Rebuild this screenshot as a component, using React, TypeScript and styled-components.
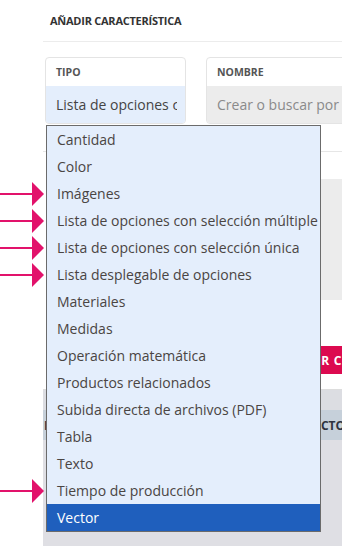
import React from 'react';
import styled, { createGlobalStyle } from 'styled-components';

const GlobalStyle = createGlobalStyle`
  html, body {
    margin: 0;
    padding: 0;
    background: #ffffff;
  }
  * {
    box-sizing: border-box;
  }
`;

const Screen = styled.div`
  position: relative;
  width: 342px;
  height: 546px;
  overflow: hidden;
  background: #ffffff;
  font-family: 'Open Sans', 'Noto Sans', sans-serif;
`;

const Panel = styled.div`
  margin-left: 43px;
  width: 420px;
`;

const TitleBar = styled.div`
  height: 42px;
  padding-left: 7px;
  border-bottom: 1px solid #ececec;
  display: flex;
  align-items: center;
`;

const Title = styled.h2`
  margin: 0;
  font-size: 11px;
  font-weight: 700;
  letter-spacing: -0.25px;
  color: #333333;
  text-transform: uppercase;
`;

const FieldsRow = styled.div`
  display: flex;
  gap: 20px;
  padding: 15px 0 27px 2px;
  border-bottom: 1px solid #e6e6e6;
`;

const FieldCard = styled.div<{ $width: number }>`
  width: ${(p) => p.$width}px;
  border: 1px solid #e4e4e4;
  border-radius: 4px;
  overflow: hidden;
`;

const FieldLabel = styled.div`
  height: 28px;
  padding: 0 10px;
  display: flex;
  align-items: center;
  font-size: 10.5px;
  font-weight: 700;
  color: #555555;
`;

const FieldValue = styled.div<{ $tone: 'blue' | 'gray' }>`
  height: 37px;
  padding: 0 8px 0 10px;
  display: flex;
  align-items: center;
  background: ${(p) => (p.$tone === 'blue' ? '#e4eefc' : '#ececec')};
  font-size: 14px;
  color: ${(p) => (p.$tone === 'blue' ? '#444444' : '#8a8a8a')};
`;

const ValueText = styled.span`
  display: block;
  width: 100%;
  overflow: hidden;
  white-space: nowrap;
`;

const DescriptionSection = styled.div`
  padding: 27px 0 0 4px;
`;

const TextBox = styled.div`
  height: 121px;
  background: #ececec;
`;

const ActionRow = styled.div`
  display: flex;
  padding: 46px 0 15px 220px;
  border-bottom: 1px solid #dddddd;
`;

const SubmitButton = styled.button`
  height: 28px;
  padding: 0 15px;
  border: 0;
  border-radius: 3px;
  background: #dc0a50;
  color: #ffffff;
  font-family: 'Open Sans', 'Noto Sans', sans-serif;
  font-size: 12px;
  font-weight: 700;
  letter-spacing: 0.8px;
  white-space: nowrap;
`;

const Band = styled.div`
  height: 20px;
  background: #dcdde2;
`;

const TableHead = styled.div`
  display: grid;
  grid-template-columns: 235px 1fr;
  height: 30px;
  align-items: center;
  background: #c6d0da;
  font-size: 12px;
  font-weight: 700;
  color: #2e3440;
`;

const HeadCell = styled.div<{ $pad: number }>`
  padding-left: ${(p) => p.$pad}px;
  white-space: nowrap;
`;

const TableBody = styled.div`
  height: 120px;
  background: #dfdfe4;
`;

const Listbox = styled.ul`
  position: absolute;
  top: 125px;
  left: 46px;
  width: 275px;
  margin: 0;
  padding: 0;
  list-style: none;
  border: 1px solid #6b6b6b;
  background: #e4eefc;
`;

const Option = styled.li<{ $selected?: boolean }>`
  height: 27px;
  padding-left: 10px;
  display: flex;
  align-items: center;
  font-size: 14px;
  white-space: nowrap;
  color: ${(p) => (p.$selected ? '#ffffff' : '#4a4543')};
  background: ${(p) => (p.$selected ? '#1f5fbd' : 'transparent')};
`;

const Pointer = styled.svg`
  position: absolute;
  left: 0;
  width: 44px;
  height: 24px;
`;

const options = [
  'Cantidad',
  'Color',
  'Imágenes',
  'Lista de opciones con selección múltiple',
  'Lista de opciones con selección única',
  'Lista desplegable de opciones',
  'Materiales',
  'Medidas',
  'Operación matemática',
  'Productos relacionados',
  'Subida directa de archivos (PDF)',
  'Tabla',
  'Texto',
  'Tiempo de producción',
  'Vector',
];

const marked = [2, 3, 4, 5, 13];

const PointerArrow: React.FC<{ index: number }> = ({ index }) => (
  <Pointer viewBox="0 0 44 24" style={{ top: 128 + index * 27 }}>
    <line x1="0" y1="12" x2="34" y2="12" stroke="#e2126b" strokeWidth="2" />
    <polygon points="32,0 44,12 32,24" fill="#e2126b" />
  </Pointer>
);

export default function App() {
  return (
    <Screen>
      <GlobalStyle />
      <Panel>
        <TitleBar>
          <Title>Añadir característica</Title>
        </TitleBar>
        <FieldsRow>
          <FieldCard $width={141}>
            <FieldLabel>TIPO</FieldLabel>
            <FieldValue $tone="blue">
              <ValueText>Lista de opciones con selección única</ValueText>
            </FieldValue>
          </FieldCard>
          <FieldCard $width={220}>
            <FieldLabel>NOMBRE</FieldLabel>
            <FieldValue $tone="gray">
              <ValueText>Crear o buscar por nombre</ValueText>
            </FieldValue>
          </FieldCard>
        </FieldsRow>
        <DescriptionSection>
          <TextBox />
        </DescriptionSection>
        <ActionRow>
          <SubmitButton>AÑADIR CARACTERÍSTICA</SubmitButton>
        </ActionRow>
        <Band />
        <TableHead>
          <HeadCell $pad={1}>DESCRIPCIÓN</HeadCell>
          <HeadCell $pad={0}>PRODUCTO</HeadCell>
        </TableHead>
        <TableBody />
      </Panel>

      <Listbox>
        {options.map((o, i) => (
          <Option key={o} $selected={i === options.length - 1}>
            {o}
          </Option>
        ))}
      </Listbox>

      {marked.map((i) => (
        <PointerArrow key={i} index={i} />
      ))}
    </Screen>
  );
}
